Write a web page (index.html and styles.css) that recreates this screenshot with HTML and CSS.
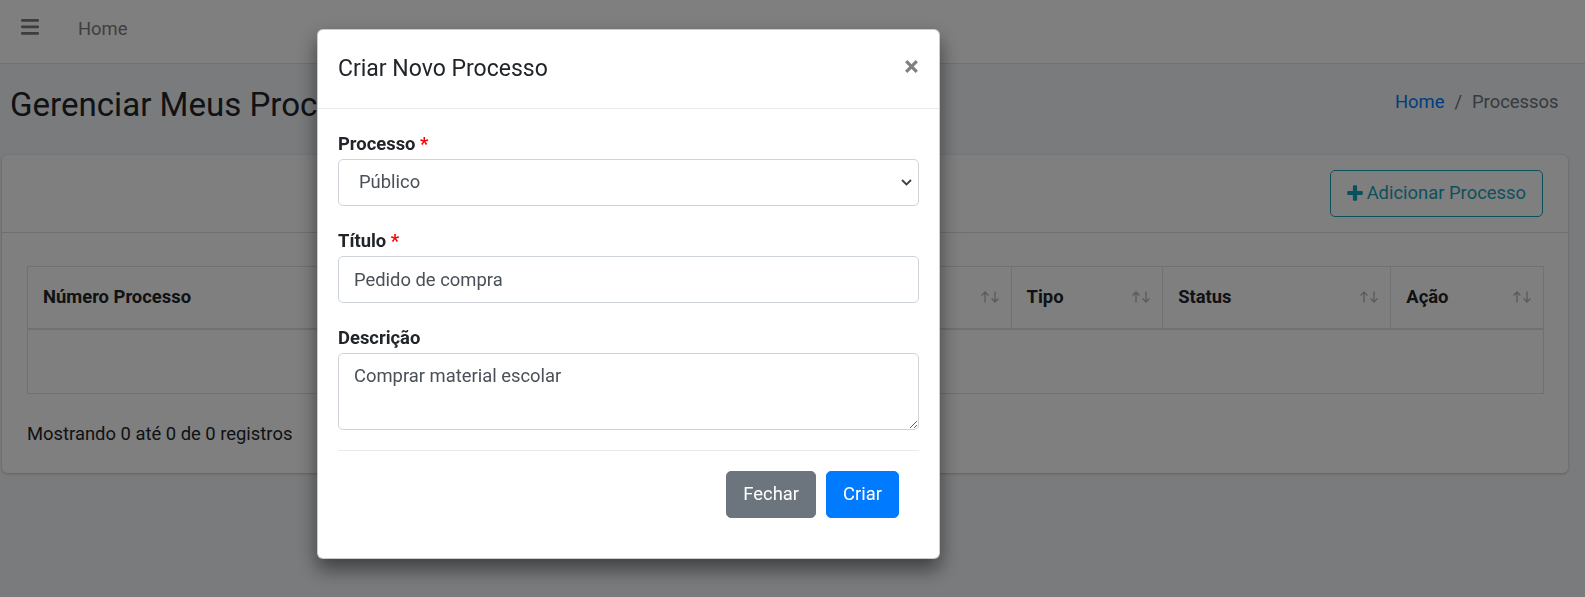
FILE: index.html
```html
<!DOCTYPE html>
<html lang="pt-BR">
<head>
<meta charset="utf-8">
<title>Gerenciar Meus Processos</title>
<link rel="stylesheet" href="styles.css">
</head>
<body>
<div class="page">
  <nav class="navbar">
    <svg class="nav-toggle" viewBox="0 0 18 16" width="18" height="16" aria-hidden="true">
      <rect x="0" y="0" width="18" height="2.8" rx="1.2"/>
      <rect x="0" y="6.5" width="18" height="2.8" rx="1.2"/>
      <rect x="0" y="13" width="18" height="2.8" rx="1.2"/>
    </svg>
    <a class="nav-home">Home</a>
  </nav>

  <section class="content-header">
    <h1 class="page-title">Gerenciar Meus Processos</h1>
    <ol class="breadcrumb">
      <li class="crumb-link">Home</li>
      <li class="crumb-sep">/</li>
      <li class="crumb-active">Processos</li>
    </ol>
  </section>

  <section class="content">
    <div class="card">
      <div class="card-header">
        <button class="btn-outline-info">
          <svg class="plus-icon" viewBox="0 0 16 16" width="16" height="16" aria-hidden="true">
            <path d="M5.9 1.2a1 1 0 0 1 1-1h2.2a1 1 0 0 1 1 1v4.7h4.7a1 1 0 0 1 1 1v2.2a1 1 0 0 1-1 1h-4.7v4.7a1 1 0 0 1-1 1h-2.2a1 1 0 0 1-1-1v-4.7h-4.7a1 1 0 0 1-1-1v-2.2a1 1 0 0 1 1-1h4.7z"/>
          </svg>
          <span>Adicionar Processo</span>
        </button>
      </div>
      <div class="card-body">
        <table class="data-table">
          <colgroup>
            <col class="c-num"><col class="c-titulo"><col class="c-tipo"><col class="c-status"><col class="c-acao">
          </colgroup>
          <thead>
            <tr>
              <th><div class="th-inner"><span>Número Processo</span><svg class="sort" viewBox="0 0 21 12" width="21" height="12"><path d="M5 11.5V1M1.6 4.4L5 1l3.4 3.4M15 0.5V11M11.6 7.6L15 11l3.4-3.4"/></svg></div></th>
              <th><div class="th-inner"><span>Título</span><svg class="sort" viewBox="0 0 21 12" width="21" height="12"><path d="M5 11.5V1M1.6 4.4L5 1l3.4 3.4M15 0.5V11M11.6 7.6L15 11l3.4-3.4"/></svg></div></th>
              <th><div class="th-inner"><span>Tipo</span><svg class="sort" viewBox="0 0 21 12" width="21" height="12"><path d="M5 11.5V1M1.6 4.4L5 1l3.4 3.4M15 0.5V11M11.6 7.6L15 11l3.4-3.4"/></svg></div></th>
              <th><div class="th-inner"><span>Status</span><svg class="sort" viewBox="0 0 21 12" width="21" height="12"><path d="M5 11.5V1M1.6 4.4L5 1l3.4 3.4M15 0.5V11M11.6 7.6L15 11l3.4-3.4"/></svg></div></th>
              <th><div class="th-inner"><span>Ação</span><svg class="sort" viewBox="0 0 21 12" width="21" height="12"><path d="M5 11.5V1M1.6 4.4L5 1l3.4 3.4M15 0.5V11M11.6 7.6L15 11l3.4-3.4"/></svg></div></th>
            </tr>
          </thead>
          <tbody>
            <tr><td colspan="5">&nbsp;</td></tr>
          </tbody>
        </table>
        <div class="table-info">Mostrando 0 até 0 de 0 registros</div>
      </div>
    </div>
  </section>
</div>

<div class="backdrop"></div>

<div class="modal" role="dialog">
  <div class="modal-header">
    <h4 class="modal-title">Criar Novo Processo</h4>
    <button class="close" aria-label="Fechar">
      <svg viewBox="0 0 13 13" width="13" height="13" aria-hidden="true">
        <path d="M1.2 1.2L11.8 11.8M11.8 1.2L1.2 11.8"/>
      </svg>
    </button>
  </div>
  <div class="modal-body">
    <div class="form-group">
      <label class="form-label">Processo <span class="req">*</span></label>
      <div class="select-wrap">
        <select class="form-control form-select">
          <option>Público</option>
          <option>Privado</option>
        </select>
        <svg class="chevron" viewBox="0 0 11 7" width="11" height="7" aria-hidden="true">
          <path d="M1 1l4.5 4.5L10 1"/>
        </svg>
      </div>
    </div>
    <div class="form-group">
      <label class="form-label">Título <span class="req">*</span></label>
      <input class="form-control" type="text" value="Pedido de compra">
    </div>
    <div class="form-group">
      <label class="form-label">Descrição</label>
      <textarea class="form-control form-textarea" rows="2">Comprar material escolar</textarea>
    </div>
    <div class="modal-footer">
      <button class="btn btn-secondary">Fechar</button>
      <button class="btn btn-primary">Criar</button>
    </div>
  </div>
</div>
</body>
</html>
```

FILE: styles.css
```css
* {
  box-sizing: border-box;
}

html,
body {
  margin: 0;
  padding: 0;
}

body {
  width: 1585px;
  height: 597px;
  overflow: hidden;
  font-family: Roboto, "Liberation Sans", Arial, sans-serif;
  font-size: 18.4px;
  line-height: 30px;
  color: #212529;
  background: #f4f6f9;
}

/* ---------- navbar ---------- */
.navbar {
  display: flex;
  align-items: flex-start;
  height: 64px;
  padding-left: 20.6px;
  background: #fff;
  border-bottom: 1px solid #dee2e6;
}

.nav-toggle {
  margin-top: 19.3px;
  fill: #7a7a7a;
}

.nav-home {
  margin-left: 39.4px;
  margin-top: 13.7px;
  color: #7f7f7f;
}

/* ---------- content header ---------- */
.content-header {
  display: flex;
  justify-content: space-between;
  align-items: flex-start;
  padding: 19px 26.5px 28.7px 10px;
}

.page-title {
  margin: 0;
  font-size: 33.1px;
  line-height: 43.2px;
  font-weight: 400;
  color: #212529;
}

.breadcrumb {
  display: flex;
  gap: 10px;
  margin: 4px 0 0;
  padding: 0;
  list-style: none;
}

.crumb-link {
  color: #007bff;
}

.crumb-sep,
.crumb-active {
  color: #6c757d;
}

/* ---------- card ---------- */
.content {
  padding: 0 17px 0 2px;
}

.card {
  background: #fff;
  border-radius: 5px;
  box-shadow: 0 0 1px rgba(0, 0, 0, .125), 0 1px 3px rgba(0, 0, 0, .2);
}

.card-header {
  display: flex;
  justify-content: flex-end;
  padding: 15px 25px 15.5px;
  border-bottom: 1px solid rgba(0, 0, 0, .125);
}

.btn-outline-info {
  display: flex;
  align-items: center;
  gap: 4px;
  padding: 7.5px 16px;
  font: inherit;
  line-height: 30px;
  color: #17a2b8;
  background: transparent;
  border: 1px solid #17a2b8;
  border-radius: 5px;
}

.plus-icon {
  fill: #17a2b8;
}

.card-body {
  padding: 25px 25px 24px;
}

.data-table {
  width: 100%;
  margin: 7.5px 0 7.5px;
  border-collapse: collapse;
  table-layout: fixed;
  border: 1px solid #dee2e6;
}

.c-num { width: 440px; }
.c-titulo { width: 543.6px; }
.c-tipo { width: 151.6px; }
.c-status { width: 228.1px; }
.c-acao { width: 152.9px; }

.data-table th {
  padding: 15.5px 10px 15.5px 15px;
  text-align: left;
  font-weight: 700;
  border: 1px solid #dee2e6;
  border-bottom: 2px solid #dee2e6;
  white-space: nowrap;
}

.th-inner {
  display: flex;
  justify-content: space-between;
  align-items: center;
}

.sort {
  flex: none;
  fill: none;
  stroke: #b5b7b9;
  stroke-width: 1.4;
}

.data-table td {
  padding: 16.5px 15px;
  border: 1px solid #dee2e6;
}

.table-info {
  padding-top: 18px;
}

/* ---------- modal ---------- */
.backdrop {
  position: fixed;
  inset: 0;
  background: rgba(0, 0, 0, .5);
}

.modal {
  position: fixed;
  left: 317px;
  top: 29px;
  width: 623px;
  background: #fff;
  border: 1px solid rgba(0, 0, 0, .2);
  border-radius: 6px;
  box-shadow: 0 10px 20px rgba(0, 0, 0, .5);
}

.modal-header {
  display: flex;
  align-items: flex-start;
  padding: 20px;
  border-bottom: 1px solid #e9ecef;
}

.modal-title {
  margin: 0;
  font-size: 23px;
  line-height: 37.5px;
  font-weight: 400;
  color: #212529;
}

.close {
  display: flex;
  margin: 10px 1px 0 auto;
  padding: 0;
  background: none;
  border: 0;
}

.close svg {
  fill: none;
  stroke: #808080;
  stroke-width: 3.2;
}

.modal-body {
  padding: 20px;
}

.form-group {
  margin-bottom: 20px;
}

.form-label {
  display: block;
  margin: 0;
  font-weight: 700;
  color: #212529;
}

.req {
  color: #ff0000;
}

.form-control {
  display: block;
  width: 100%;
  height: 47px;
  padding: 7.5px 15px;
  font: inherit;
  line-height: 30px;
  color: #495057;
  background: #fff;
  border: 1px solid #ced4da;
  border-radius: 5px;
}

.select-wrap {
  position: relative;
}

.form-select {
  appearance: none;
  -webkit-appearance: none;
  padding-left: 20px;
}

.chevron {
  position: absolute;
  right: 7px;
  top: 20px;
  fill: none;
  stroke: #3a3f44;
  stroke-width: 1.8;
}

.form-textarea {
  height: 77px;
  resize: vertical;
}

.modal-footer {
  display: flex;
  justify-content: flex-end;
  padding: 15px;
  border-top: 1px solid #e9ecef;
}

.btn {
  margin: 5px;
  padding: 7.5px 16px;
  font: inherit;
  line-height: 30px;
  color: #fff;
  border: 1px solid transparent;
  border-radius: 5px;
}

.btn-secondary {
  background: #6c757d;
  border-color: #6c757d;
}

.btn-primary {
  background: #007bff;
  border-color: #007bff;
}
```
